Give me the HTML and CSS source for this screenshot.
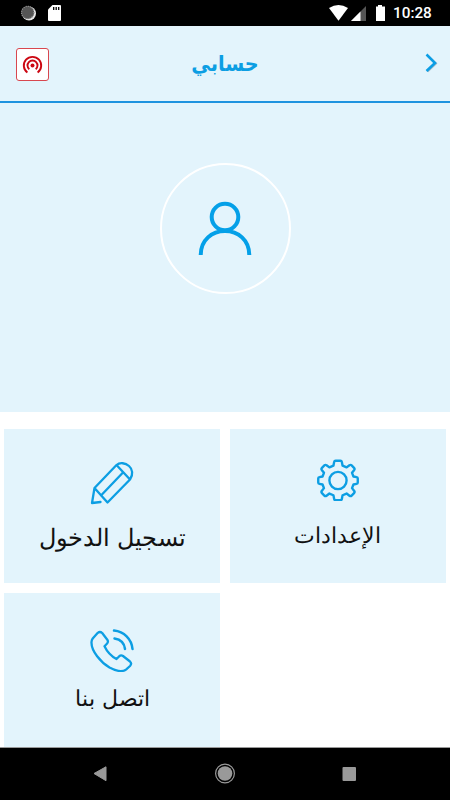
FILE: index.html
```html
<!DOCTYPE html>
<html lang="ar">
<head>
<meta charset="utf-8">
<title>حسابي</title>
<link rel="stylesheet" href="styles.css">
</head>
<body>
<div class="screen">
  <div class="status">
    <svg class="status-left" width="64" height="26" viewBox="0 0 64 26">
      <circle cx="29" cy="13.5" r="7" fill="#e8e8e8"/>
      <circle cx="27.7" cy="12.5" r="6.5" fill="#555"/>
      <circle cx="27.7" cy="12.5" r="6.2" fill="none" stroke="#999" stroke-width="1.2" stroke-dasharray="1 1.2"/>
      <path d="M52.5 5H60q1 0 1 1v14q0 1-1 1H49q-1 0-1-1V9.500Z" fill="#fff"/>
      <path d="M53.700 7v3M56.200 7v3M58.700 7v3" stroke="#000" stroke-width="1.300"/>
    </svg>
    <svg class="status-right" width="60" height="26" viewBox="0 0 60 26">
      <path d="M0 8Q9.500 2.200 19 8L9.500 20.700Z" fill="#fff"/>
      <path d="M37 6V21H22Z" fill="#555"/>
      <path d="M31.500 11.500V21H22Z" fill="#fff"/>
      <path d="M49 5h4v1.500h3V21h-9V6.500h2Z" fill="#fff"/>
    </svg>
    <span class="clock">10:28</span>
  </div>
  <header class="header">
    <div class="logo">
      <svg width="31" height="31" viewBox="0 0 31 31" fill="none" stroke="#cc0712">
        <circle cx="15.500" cy="16.500" r="2" fill="#cc0712" stroke="none"/>
        <path d="M12.300 20.300A5 5 0 1 1 18.700 20.300" stroke-width="1.900"/>
        <path d="M10.400 23.600A8.700 8.700 0 1 1 20.600 23.600" stroke-width="1.900"/>
      </svg>
    </div>
    <h1 class="title" dir="rtl">حسابي</h1>
    <svg class="chevron" width="33" height="20" viewBox="-19 0 33 20" fill="none">
      <path d="M3.500 2.500L12 10.500L3.500 18.500" stroke="#9bb7c6" stroke-width="2"/>
      <path d="M2.500 1.500L11 10L2.500 18" stroke="#0c9ee5" stroke-width="2.500"/>
    </svg>
  </header>
  <section class="profile">
    <div class="avatar">
      <svg width="54" height="54" viewBox="0 0 54 54" fill="none" stroke="#04a0e8" stroke-width="4">
        <circle cx="27" cy="16" r="13.300"/>
        <path d="M2.700 54C2.700 39 14 30 27 30S51.300 39 51.300 54"/>
      </svg>
    </div>
  </section>
  <main class="cards">
    <div class="card login">
      <svg width="44" height="44" viewBox="0 0 44 44" fill="none" stroke="#0c9ee3" stroke-width="2.300" stroke-linejoin="round" stroke-linecap="round">
        <path d="M17.500 41.500L40 18.500C43.500 13.500 42.500 8 39 5S30 1 26.500 4L4.500 27L2 42L10.500 41M4.500 27L17.500 41.500M26.500 4L40 18.500M11 34.500L33 11.500"/>
      </svg>
      <span class="label" dir="rtl">تسجيل الدخول</span>
    </div>
    <div class="card settings">
      <svg width="42" height="42" viewBox="0 0 44 44" fill="none" stroke="#0c9ee3" stroke-width="2.500" stroke-linejoin="round">
        <circle cx="22" cy="22.500" r="9"/>
        <path d="M18 3Q18.200 1.800 19.500 1.800H24.500Q25.800 1.800 26 3L26.800 7 31 8.800 34 6.500Q35.300 5.700 36.300 6.700L38.800 9.200Q39.800 10.200 39 11.500L36.700 14.500 38.200 18.300 41.500 19Q42.700 19.200 42.700 20.500V24.500Q42.700 25.800 41.500 26L38.200 26.700 36.700 30.500 39 33.500Q39.800 34.800 38.800 35.800L36.300 38.300Q35.300 39.300 34 38.500L31 36.200 26.800 38 26 42Q25.800 43.200 24.500 43.200H19.500Q18.200 43.200 18 42L17.200 38 13 36.200 10 38.500Q8.700 39.300 7.700 38.300L5.200 35.800Q4.200 34.800 5 33.500L7.300 30.500 5.800 26.700 2.500 26Q1.300 25.800 1.300 24.500V20.500Q1.300 19.200 2.500 19L5.800 18.300 7.300 14.500 5 11.500Q4.200 10.200 5.200 9.200L7.700 6.700Q8.700 5.700 10 6.500L13 8.800 17.200 7Z"/>
      </svg>
      <span class="label" dir="rtl">الإعدادات</span>
    </div>
    <div class="card contact">
      <svg width="44" height="44" viewBox="0 0 44 44" fill="none" stroke="#0c9ee3" stroke-width="2.300" stroke-linejoin="round" stroke-linecap="round">
        <path d="M2.700 10.500L7.800 4.800Q10 3 12.200 5L17.500 12Q18.600 14 16.900 15.700L14.500 18.200C17 23.500 21 28 26.500 31L29.300 28.200Q31 26.700 33 28L40 33.500Q42.200 35.500 40 38L36 41.600C32.500 44 26 43 19.500 39.500C11 34.500 1 23 1.500 14Q1.600 12 2.700 10.500Z"/>
        <path d="M24 2.500C34 3.500 41.500 11 42.500 21" stroke-width="2.500"/>
        <path d="M24.500 10.500Q34 12 35 21" stroke-width="2.500"/>
      </svg>
      <span class="label" dir="rtl">اتصل بنا</span>
    </div>
  </main>
  <nav class="nav">
    <svg width="450" height="52" viewBox="0 0 450 52" fill="#999">
      <path d="M94 25.500L106 18.800V32.700Z" stroke="#999" stroke-linejoin="round"/>
      <circle cx="225" cy="25.500" r="9.400" fill="none" stroke="#999" stroke-width="1.200"/>
      <circle cx="225" cy="25.500" r="7.300"/>
      <rect x="342.500" y="19" width="13.500" height="14" rx="1"/>
    </svg>
  </nav>
</div>
</body>
</html>
```
FILE: styles.css
```css
* { box-sizing: border-box; }
body { margin: 0; background: #fff; }
svg { display: block; flex: none; }
.screen { width: 450px; height: 800px; overflow: hidden; display: flex; flex-direction: column; }
.status { height: 26px; flex: none; background: #000; display: flex; }
.status-right { margin-left: auto; }
.clock { width: 61px; padding-left: 4px; font: 500 15.3px/27px Roboto, sans-serif; color: #fff; }
.header { height: 77px; flex: none; background: #e3f4fc; border-bottom: 2px solid #1e93df; display: flex; align-items: center; justify-content: space-between; padding: 0 12px 0 16px; }
.logo { width: 33px; height: 33px; margin-top: 1px; border: 1px solid #d8474f; border-radius: 3px; background: #fff; }
.title { margin: 0 0 0 -4px; font: bold 19.3px/30px "DejaVu Sans", sans-serif; color: #0c9ee3; transform: scaleY(1.12); }
.chevron { margin-bottom: 1px; }
.profile { height: 309px; flex: none; background: #e3f4fc; padding-top: 60px; }
.avatar { width: 131px; height: 131px; margin: 0 auto; border: 2px solid #fff; border-radius: 50%; display: flex; align-items: flex-start; justify-content: center; padding-top: 36px; }
.cards { height: 335px; flex: none; display: grid; grid-template-columns: 216px 216px; grid-template-rows: 154px 154px; gap: 10.5px 9.500px; padding: 16.5px 4.400px 0; }
.card { background: #e3f4fc; display: flex; flex-direction: column; align-items: center; padding-top: 32px; }
.settings { padding-top: 30px; }
.contact { padding-top: 35px; }
.label { margin-top: 13px; font: 200 22px/40px "DejaVu Sans", sans-serif; color: #111; white-space: nowrap; }
.login .label { font-size: 23.5px; }
.settings .label { margin-top: 15px; }
.contact .label { margin-top: 7px; font-size: 21.5px; }
.nav { height: 53px; flex: none; background: #000; border-top: 1px solid #999; }
```
